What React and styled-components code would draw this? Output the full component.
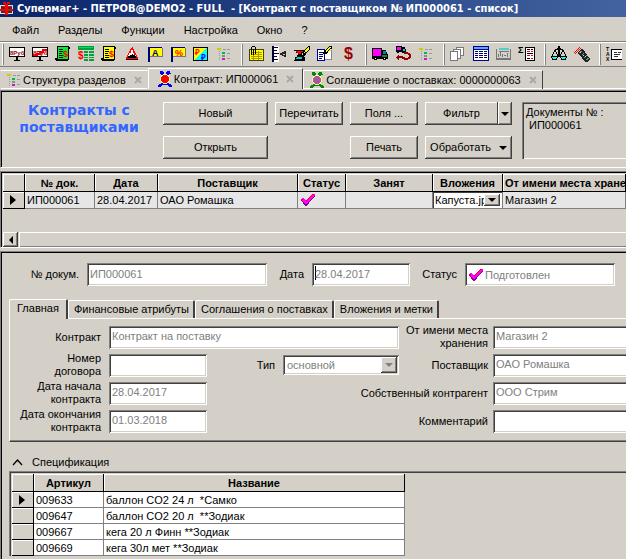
import React from 'react'
import styled, { createGlobalStyle, css } from 'styled-components'

const GlobalStyle = createGlobalStyle`
  * {
    box-sizing: border-box;
  }
  body {
    margin: 0;
    background: #d4d0c8;
    color: #000;
    font-family: 'Liberation Sans', Arial, sans-serif;
    font-size: 11px;
    line-height: 13px;
    overflow: hidden;
  }
  button, input, select {
    font: inherit;
    color: inherit;
  }
`

/* ---------- icons ---------- */

const Glyph = styled.svg`
  display: block;
  flex: none;
  width: 16px;
  height: 16px;
  shape-rendering: crispEdges;
  overflow: visible;
`

const Icon = ({ children }) => (
  <Glyph viewBox="0 0 16 16" aria-hidden="true">{children}</Glyph>
)

const Letter = ({ x, y, size = 9, fill = '#f00', children }) => (
  <text x={x} y={y} fontSize={size} fontWeight="bold" fill={fill}>{children}</text>
)

const Billboard = ({ crossed }) => (
  <Icon>
    <path d="M0 1h16v10H0z" fill="#000" />
    <path d="M1 2h14v8H1z" fill="#fff" />
    <Letter x={1} y={9} size={6} fill="#900">8Руб</Letter>
    {crossed && <path d="M1 10V8h3V7h3V5h3V3h5v2h-3v2H9v2H6v1z" fill="#e00" />}
    <path d="M7 11h2v3h-2zM5 14h6v1H5z" fill="#000" />
  </Icon>
)

const Bill = ({ color }) => (
  <Icon>
    <path d="M2 0h12v1h1v2h-1v11h-1v1H1v-1H0v-2h2z" fill="#000" />
    <path d="M3 1h10v12H3z" fill={color} />
    <path d="M4 3h4v1H4zM4 5h4v1H4zM4 7h3v1H4zM4 9h4v1H4zM4 11h4v1H4z" fill="#000" />
    <Letter x={8} y={11} size={9}>$</Letter>
  </Icon>
)

const PriceTable = () => (
  <Icon>
    <path d="M0 0h16v4H0zM6 5h4v2H6zM11 5h5v2h-5zM6 8h4v2H6zM11 8h5v2h-5zM6 11h4v1H6zM11 11h5v1h-5zM6 13h4v2H6zM11 13h5v2h-5z" fill="#00a03c" />
    <path d="M1 1h14v1H1z" fill="#0d5" />
    <Letter x={0} y={13} size={10}>$</Letter>
  </Icon>
)

const Warning = () => (
  <Icon>
    <path d="M8 1h1v2h1v2h1v2h1v2h1v2h1v2H2v-2h1V9h1V7h1V5h1V3h1V2h1z" fill="#f00" />
    <path d="M7 4h2v3h1v2h2v3H4V9h1V7h2z" fill="#fff" />
    <path d="M4 10h2V9h2V8h1v1h2v1h1v2H4zM2 13h12v1H2z" fill="#000" />
  </Icon>
)

const Flag = ({ letter, color }) => (
  <Icon>
    <path d="M1 1h14v10H3v5H1z" fill="#000080" />
    <path d="M3 2h12v9H3z" fill="#ff0" />
    <path d="M3 11h13V2h-1v8H3z" fill="#777" />
    <Letter x={5} y={10} size={9} fill={color}>{letter}</Letter>
  </Icon>
)

const Currency = () => (
  <Icon>
    <path d="M0 1h15v14H0z" fill="#000" />
    <path d="M1 2h13L1 14z" fill="#ff0" />
    <path d="M14 2v12H1z" fill="#0ff" />
    <Letter x={2} y={9} size={8}>₽</Letter>
    <Letter x={8} y={14} size={8} fill="#00f">₽</Letter>
  </Icon>
)

const Tree = () => (
  <Icon>
    <path d="M1 2h4v2H1z" fill="#cc0" />
    <path d="M7 3h3v1H7zM11 3h3v1h-3zM3 5h1v1H3zM3 7h1v1H3zM3 9h1v1H3zM3 11h1v1H3zM3 13h1v1H3zM11 7h3v1h-3zM11 12h3v1h-3z" fill="#999" />
    <path d="M6 6h3v2H6z" fill="#0b4" />
    <path d="M6 9h3v2H6z" fill="#7a9a80" />
    <path d="M6 12h3v2H6z" fill="#b2c" />
  </Icon>
)

const Attachment = () => (
  <Icon>
    <path d="M1 3h15v12H1z" fill="#440" />
    <path d="M2 4h13v10H2z" fill="#ff0" />
    <path d="M3 6h11v1H3zM3 8h11v1H3zM3 10h11v1H3zM3 12h11v1H3zM5 5h1v9H5zM10 5h1v9h-1z" fill="#a90" />
    <path d="M3 1h1v8H3zM4 0h3v1H4zM7 1h1v7H7zM5 3h1v6H5z" fill="#000" />
  </Icon>
)

const Ruler = () => (
  <Icon>
    <path d="M1 0h7v16H1z" fill="#fff" />
    <path d="M1 0h2v16H1zM3 1h4v1H3zM3 4h3v1H3zM3 7h5v1H3zM3 10h3v1H3zM3 13h4v1H3z" fill="#003" />
    <path d="M9 7h2V6h2V5h2v6h-2v-1h-2V9H9zM12 8h2v1h-2z" fill="#222" fillRule="evenodd" />
  </Icon>
)

const Hourglass = () => (
  <Icon>
    <path d="M0 4h11v1h-1v1H9v1H8v2h2v2h1v4H0v-1h1v-3h2V9h1V7H2V5H0z" fill="#000" />
    <path d="M2 5h7v1H7v2H4V7H3z" fill="#f00" />
    <path d="M3 11h5v2H2z" fill="#0cc" />
    <path d="M14 0h2v3l-4 5-3 3-1-1 2-5z" fill="#000" />
    <path d="M14 1h1v2l-3 3-2 1 1-2z" fill="#ff0" />
  </Icon>
)

const Notes = () => (
  <Icon>
    <path d="M0 3h8v12H0z" fill="#000080" />
    <path d="M1 4h6v10H1zM8 5h7v9H8z" fill="#fff" />
    <path d="M2 6h4v1H2zM2 8h4v1H2zM2 10h4v1H2zM2 12h3v1H2z" fill="#000080" />
    <path d="M14 4h1v10H8v-1h6z" fill="#888" />
    <path d="M6 6l6-6h3v3L9 8H6z" fill="#000" />
    <path d="M8 5l4-4h2L9 6zM10 6l4-4v1l-3 4z" fill="#ff0" />
  </Icon>
)

const Dollar = () => (
  <Icon>
    <Letter x={4} y={13} size={16} fill="#900">$</Letter>
  </Icon>
)

const Truck = () => (
  <Icon>
    <path d="M0 2h10v2h4v2h1v2h1v5h-2v1h-3v-1H5v1H2v-1H0z" fill="#000" />
    <path d="M1 3h8v7H1z" fill="#f0f" />
    <path d="M11 5h3v3h-3z" fill="#088" />
    <path d="M10 9h5v2h-5z" fill="#084" />
    <path d="M3 12h1v1H3zM12 12h1v1h-1z" fill="#fff" />
  </Icon>
)

const Route = () => (
  <Icon>
    <path d="M1 0h6v1h3v2h1v3H9v1H7V6H4v1H2V6H1z" fill="#000" />
    <path d="M2 1h4v3H2z" fill="#f0f" />
    <path d="M8 3h2v2H8z" fill="#0cc" />
    <path d="M9 6h4v1h2v1h1v4h-1v1h-2v1H9v-1H7v-1H4v2H3v-1H2v-1H1v-1h1v-1h1V9h1v1h4v1h2v1h3v-1h1V9h-1V8H9z" fill="#900" />
  </Icon>
)

const Copies = () => (
  <Icon>
    <path d="M6 1h8v9H6z" fill="#777" />
    <path d="M7 2h6v7H7z" fill="#fff" />
    <path d="M3 3h8v10H3z" fill="#777" />
    <path d="M4 4h6v8H4z" fill="#fff" />
    <path d="M0 5h8v10H0z" fill="#777" />
    <path d="M1 6h6v8H1z" fill="#fff" />
  </Icon>
)

const Sheet = () => (
  <Icon>
    <path d="M0 0h16v15H0z" fill="#000080" />
    <path d="M1 1h14v2H1z" fill="#5af" />
    <path d="M1 4h14v10H1z" fill="#fff" />
    <path d="M2 5h3v1H2zM6 5h4v1H6zM11 5h3v1h-3zM2 7h3v1H2zM6 7h4v1H6zM11 7h3v1h-3zM2 9h3v1H2zM6 9h4v1H6zM11 9h3v1h-3zM2 11h3v1H2zM6 11h4v1H6zM11 11h3v1h-3z" fill="#000080" />
  </Icon>
)

const Planner = () => (
  <Icon>
    <path d="M3 2h10v2H3z" fill="#5cc" />
    <path d="M0 3h1v11H0zM14 3h1v11h-1zM3 5h10v1H3zM0 12h15v2H0zM2 8h1v3H2zM4 6h1v4H4zM6 8h1v3H6zM8 9h2v1H8zM11 7h1v4h-1z" fill="#777" />
  </Icon>
)

const SumSheet = () => (
  <Icon>
    <Letter x={-1} y={7} size={9} fill="#000">Σ</Letter>
    <path d="M6 1h10v14H6z" fill="#000" />
    <path d="M7 2h8v12H7z" fill="#fff" />
    <path d="M8 3h3v1H8zM12 3h2v1h-2zM8 7h6v1H8zM8 12h3v1H8z" fill="#000" />
    <path d="M8 5h3v1H8zM12 5h2v1h-2zM8 9h3v1H8zM12 9h2v1h-2zM12 12h2v1h-2z" fill="#f00" />
  </Icon>
)

const Scales = () => (
  <Icon>
    <path d="M7 0h2v2h1v1h2v1H9v7H7V4H4V3h2V2h1z" fill="#000" />
    <path d="M4 4l-3 6M4 4l3 6M12 4l-3 6M12 4l3 6" stroke="#000" fill="none" />
    <path d="M0 10h7v2H6v2H1v-2H0zM9 10h7v2h-1v2h-5v-2H9z" fill="#000" />
    <path d="M1 11h5v1H5v1H2v-1H1zM10 11h5v1h-1v1h-3v-1h-1z" fill="#0ff" />
  </Icon>
)

const Torch = () => (
  <Icon>
    <path d="M0 7l6-6M1 8l6-6" stroke="#f00" strokeWidth="1" fill="none" />
    <path d="M3 7l5-4 3 3 5 7-3 3h-2L6 9z" fill="#222" />
    <path d="M5 7l3-2M8 9l2-2M10 12l3-3M12 14l3-2" stroke="#5a9a9a" fill="none" />
    <path d="M6 6h1v1H6zM9 9h1v1H9zM11 10h1v1h-1z" fill="#ddd" />
  </Icon>
)

const Tax = () => (
  <Icon>
    <Letter x={0} y={5} size={5} fill="#000">T</Letter>
    <Letter x={0} y={10} size={5} fill="#000">A</Letter>
    <Letter x={0} y={15} size={5} fill="#000">X</Letter>
    <path d="M5 3h11v11H5z" fill="#000" />
    <path d="M6 4h10v9H6z" fill="#fff" />
    <path d="M8 6h3v1H8zM12 6h3v1h-3zM8 8h6v1H8zM8 10h4v1H8z" fill="#333" />
  </Icon>
)

const Flower = ({ core, leaf }) => (
  <Icon>
    <path d="M3 0h3v1h1v2h2V1h1V0h3v2h1v1h-2v10h2v1h1v2h-3v-1h-1v-1H5v1H4v1H1v-2h1v-1h2V3H3z" fill={leaf} />
    <path d="M6 3h4v1h2v2h1v4h-1v2h-2v1H6v-1H4v-2H3V6h1V4h2z" fill="#ff8" />
    <path d="M6 4h4v1h1v1h1v4h-1v1h-1v1H6v-1H5v-1H4V6h1V5h1z" fill={core} />
  </Icon>
)

const AppMark = () => (
  <Icon>
    <path d="M0 4h13v9H0z" fill="#ddd" />
    <path d="M1 5h4v3H1zM8 5h4v3H8zM1 10h4v2H1zM8 10h4v2H8z" fill="#333" />
    <path d="M5 3h3v11H5zM0 8h13v2H0zM3 1h3v2H3zM7 1h3v2H7z" fill="#f00" />
    <path d="M2 5h3v1H2zM8 5h3v1H8z" fill="#f00" />
  </Icon>
)

const Tick = () => (
  <Glyph viewBox="0 0 16 16" role="img" aria-label="Подготовлен">
    <path d="M1 8l2-1 3 3 6-7 3-1v2l-3 3-5 7H5z" fill="#808" />
    <path d="M1 7l2-1 3 3 6-7h3v1l-3 3-6 7z" fill="#f0f" />
    <path d="M6 9l6-7h2v1h-2l-5 6zM1 7h2v1H1z" fill="#f00" />
  </Glyph>
)

const Arrow = styled.span`
  flex: none;
  border: 4px solid transparent;
  border-top-color: ${({ $muted }) => ($muted ? '#808080' : '#000')};
  border-bottom: 0;
`

const Pointer = styled.span`
  display: block;
  width: 6px;
  margin-left: 7px;
  border: 5px solid transparent;
  border-left: 6px solid #000;
  border-right: 0;
`

/* ---------- window chrome ---------- */

const raised = css`
  background: #d4d0c8;
  border: 0;
  border-radius: 0;
  box-shadow: inset -1px -1px #404040, inset 1px 1px #fff, inset -2px -2px #808080;
`

const Window = styled.div`
  min-height: 100vh;
  display: flex;
  flex-direction: column;
`

const TitleBar = styled.header`
  display: flex;
  align-items: center;
  gap: 1px;
  height: 17px;
  background: linear-gradient(90deg, #0a246a, #42639f);
  color: #fff;
  font: bold 11px/13px 'DejaVu Sans Condensed', 'DejaVu Sans', sans-serif;
  white-space: pre;
`

const MenuBar = styled.nav`
  display: flex;
  gap: 19px;
  height: 24px;
  padding: 7px 12px 0;
`

const MenuItem = styled.a`
  color: #000;
  text-decoration: none;
`

const ToolBar = styled.div`
  display: flex;
  align-items: center;
  height: 26px;
  padding-left: 2px;
  border-top: 1px solid #808080;
  border-bottom: 1px solid #808080;
  box-shadow: inset 0 1px #fff;
`

const ToolButton = styled.button`
  display: flex;
  align-items: center;
  justify-content: center;
  flex: none;
  width: 23px;
  height: 22px;
  padding: 0;
  border: 0;
  background: none;
`

const Divider = styled.span`
  flex: none;
  width: 2px;
  height: 21px;
  margin: 0 1px 0 6px;
  border-left: 1px solid #fff;
  border-right: 1px solid #808080;

  &:first-child {
    margin-left: 0;
  }
`

const DocTabs = styled.div`
  display: flex;
  align-items: flex-end;
  height: 22px;
  padding-top: 1px;
  box-shadow: inset 0 -1px #fff;
`

const DocTab = styled.button`
  display: flex;
  align-items: center;
  flex: none;
  gap: 1px;
  height: ${({ $active }) => ($active ? 21 : 19)}px;
  padding: 0 ${({ $active }) => ($active ? 8 : 5)}px;
  border: 0;
  border-top: 1px solid #fff;
  border-right: 1px solid ${({ $first }) => ($first ? '#d4d0c8' : '#404040')};
  border-left: 1px solid ${({ $first }) => ($first ? '#d4d0c8' : '#fff')};
  background: ${({ $active }) => ($active ? '#d4d0c8' : 'none')};
  white-space: nowrap;
`

const CloseMark = styled.svg`
  width: 8px;
  height: 8px;
  margin-left: 7px;
  stroke: #a8a8a8;
  stroke-width: 2;
`

const Panel = styled.section`
  border-top: 1px solid #808080;
  border-left: 1px solid #808080;
  box-shadow: inset 1px 1px #000;
`

/* ---------- command panel ---------- */

const Commands = styled(Panel)`
  display: grid;
  grid-template-columns: 154px 105px 68px 68px 87px minmax(100px, 1fr);
  grid-template-rows: 23px 23px;
  gap: 11px 7px;
  height: 78px;
  margin-top: 1px;
  padding: 11px 0 0 1px;
  border-bottom: 1px solid #fff;
`

const Heading = styled.h1`
  grid-row: span 2;
  margin: 0;
  color: #3366ff;
  font: bold 14px/17px 'DejaVu Sans', Verdana, sans-serif;
  text-align: center;
`

const Button = styled.button`
  ${raised}
  display: flex;
  align-items: center;
  justify-content: center;
  gap: 8px;
  padding: 0;
  white-space: nowrap;
`

const Split = styled.div`
  display: flex;

  ${Button}:first-child {
    flex: 1;
    box-shadow: inset -1px -1px #404040, inset 1px 1px #fff, inset 0 -2px #808080;
  }
  ${Button}:last-child {
    width: 14px;
  }
`

const OpenButton = styled(Button)`
  grid-column: 2;
`

const PrintButton = styled(Button)`
  grid-column: 4;
`

const Info = styled.div`
  grid-area: 1 / 6 / 3 / 7;
  margin-left: 3px;
  padding: 4px;
  box-shadow: inset 1px 1px #808080, inset 2px 2px #404040, inset 0 -1px #fff;
  white-space: pre;
`

/* ---------- grids ---------- */

const GridPanel = styled(Panel)`
  height: 77px;
  margin-top: 3px;
  padding: 2px 0 0 2px;
  border-bottom: 1px solid #fff;
  display: flex;
  flex-direction: column;
  justify-content: space-between;
  overflow: hidden;
`

const Table = styled.table`
  width: ${({ $width }) => $width};
  table-layout: fixed;
  border-collapse: separate;
  border-spacing: 0;
  line-height: 12px;
`

const Th = styled.th`
  height: 18px;
  padding: 0 2px;
  border-right: 1px solid #000;
  border-bottom: 1px solid #000;
  box-shadow: inset 1px 1px #fff;
  background: #d4d0c8;
  overflow: hidden;
  white-space: nowrap;
`

const Td = styled.td`
  height: 16px;
  padding: ${({ $flush }) => ($flush ? '0' : '0 2px')};
  border-right: 1px solid #808080;
  border-bottom: 1px solid #808080;
  background: ${({ $lit }) => ($lit ? '#e6e6e6' : '#fff')};
  overflow: hidden;
  white-space: pre;
`

const RowHead = styled.th`
  padding: 0;
  border-right: 1px solid #000;
  border-bottom: 1px solid #000;
  box-shadow: inset 1px 1px #fff;
  background: #d4d0c8;
`

const ScrollBar = styled.div`
  display: flex;
  height: 15px;
  gap: 1px;
  box-shadow: 0 1px #404040;
`

const ScrollButton = styled.button`
  ${raised}
  display: flex;
  align-items: center;
  justify-content: center;
  width: 15px;
  padding: 0;
`

const LeftArrow = styled.span`
  border: 4px solid transparent;
  border-right-color: #000;
  border-left: 0;
`

const Thumb = styled.div`
  flex: 1;
  box-shadow: inset 1px 1px #fff, inset 0 -1px #808080;
`

/* ---------- form ---------- */

const sunken = css`
  border: 0;
  border-radius: 0;
  background: #fff;
  box-shadow: inset 1px 1px #808080, inset -1px -1px #fff, inset 2px 2px #404040, inset -2px -2px #d4d0c8;
`

const Details = styled(Panel)`
  flex: 1;
  margin-top: 3px;
  padding: 11px 0 0 8px;
  overflow: hidden;
`

const Summary = styled.div`
  display: grid;
  grid-template-columns: 78px 180px 45px 98px 55px 150px;
  align-items: center;
  height: 23px;
`

const Label = styled.label`
  padding-right: ${({ $tight }) => ($tight ? 5 : 8)}px;
  grid-column: ${({ $col }) => $col || 'auto'};
  text-align: right;
  white-space: ${({ $wrap }) => ($wrap ? 'pre-line' : 'nowrap')};
`

const Input = styled.input`
  ${sunken}
  width: 100%;
  min-width: 0;
  height: 23px;
  padding: 0 3px 2px;
  color: #808080;
  outline: 0;
  grid-column: ${({ $col }) => $col || 'auto'};
  ${({ $caret }) => $caret && css`
    background: linear-gradient(#000, #000) 3px 3px / 1px 14px no-repeat #fff;
  `}
`

const StatusField = styled.div`
  ${sunken}
  display: flex;
  align-items: center;
  height: 23px;
  padding-left: 3px;

  ${Input} {
    height: 19px;
    padding: 0 1px;
    background: none;
    box-shadow: none;
  }
`

const Tabs = styled.div`
  display: flex;
  align-items: flex-end;
  height: 20px;
  margin-top: 12px;
`

const Tab = styled.button`
  height: ${({ $active }) => ($active ? 20 : 18)}px;
  margin-bottom: ${({ $active }) => ($active ? -1 : 0)}px;
  padding: ${({ $active }) => ($active ? '0 7px 3px' : '0 4px 0 5px')};
  border: 0;
  border-top: 1px solid #fff;
  border-left: 1px solid #fff;
  border-right: 2px solid #404040;
  border-radius: 2px 2px 0 0;
  background: #d4d0c8;
  white-space: nowrap;
`

const Form = styled.form`
  display: grid;
  grid-template-columns: 99px 98px 76px 116px 94px minmax(150px, 1fr);
  grid-auto-rows: 22px;
  row-gap: 6px;
  align-items: center;
  height: 124px;
  padding-top: 7px;
  border-top: 1px solid #fff;
  border-left: 1px solid #fff;
  border-bottom: 1px solid #404040;
  box-shadow: inset 0 -1px #808080;
`

const Combo = styled.div`
  position: relative;
  height: ${({ $small }) => ($small ? 16 : 20)}px;
`

const Select = styled.select`
  ${sunken}
  appearance: none;
  width: 100%;
  height: 100%;
  padding: 0 0 0 ${({ $small }) => ($small ? 2 : 4)}px;
  color: ${({ disabled }) => (disabled ? '#808080' : '#000')};
  opacity: 1;
  ${({ $small }) => $small && css`
    box-shadow: inset 1px 1px #404040;
  `}
`

const ComboArrow = styled.span`
  ${raised}
  position: absolute;
  top: 2px;
  right: 2px;
  bottom: 2px;
  width: 16px;
  display: flex;
  align-items: center;
  justify-content: center;
  pointer-events: none;
`

const SpecTitle = styled.h2`
  display: flex;
  align-items: center;
  gap: 9px;
  margin: 13px 0 1px 3px;
  font-size: 11px;
  font-weight: normal;
  line-height: 15px;
`

const SpecGrid = styled.div`
  padding: 2px 0 0 2px;
  border-top: 1px solid #808080;
  border-left: 1px solid #808080;
  box-shadow: inset 1px 1px #404040;
`

const tools = [
  [
    ['Цены', <Billboard />], ['Отмена цен', <Billboard crossed />], ['Счета', <Bill color="#0e3" />],
    ['Прайс', <PriceTable />], ['Накладные', <Bill color="#ff0" />], ['Контроль', <Warning />],
    ['Акции', <Flag letter="A" color="#000080" />], ['Скидки', <Flag letter="%" color="#f00" />],
    ['Валюты', <Currency />], ['Структура', <Tree />],
  ],
  [
    ['Вложения', <Attachment />], ['Измерения', <Ruler />], ['Сроки', <Hourglass />],
    ['Заметки', <Notes />], ['Оплата', <Dollar />],
  ],
  [['Поставки', <Truck />], ['Маршруты', <Route />], ['Дерево', <Tree />]],
  [['Копии', <Copies />], ['Таблица', <Sheet />], ['План', <Planner />], ['Итоги', <SumSheet />]],
  [['Баланс', <Scales />], ['Поиск', <Torch />]],
  [['Налоги', <Tax />]],
]

const menu = ['Файл', 'Разделы', 'Функции', 'Настройка', 'Окно', '?']

const docTabs = [
  { title: 'Структура разделов', icon: <Tree />, first: true },
  { title: 'Контракт: ИП000061', icon: <Flower core="#f00" leaf="#00f" />, active: true },
  { title: 'Соглашение о поставках: 0000000063', icon: <Flower core="#a5a" leaf="#080" /> },
]

const formTabs = ['Главная', 'Финансовые атрибуты', 'Соглашения о поставках', 'Вложения и метки']

const items = [
  ['009633', 'баллон CO2 24 л  *Самко'],
  ['009647', 'баллон CO2 20 л  **Зодиак'],
  ['009667', 'кега 20 л Финн **Зодиак'],
  ['009669', 'кега 30л мет **Зодиак'],
]

const App = () => {
  return (
    <Window>
      <GlobalStyle />
      <TitleBar>
        <AppMark />
        {'Супермаг+ - ПЕТРОВ@DEMO2 - FULL  - [Контракт с поставщиком № ИП000061 - список]'}
      </TitleBar>
      <MenuBar>
        {menu.map((name) => <MenuItem href="#" key={name}>{name}</MenuItem>)}
      </MenuBar>
      <ToolBar>
        {tools.map((group, i) => (
          <React.Fragment key={i}>
            <Divider />
            {group.map(([name, icon]) => (
              <ToolButton key={name} aria-label={name}>{icon}</ToolButton>
            ))}
          </React.Fragment>
        ))}
      </ToolBar>
      <DocTabs>
        {docTabs.map((tab) => (
          <DocTab key={tab.title} $active={tab.active} $first={tab.first}>
            {tab.icon}
            {tab.title}
            <CloseMark viewBox="0 0 8 8"><path d="M1 1l6 6M7 1l-6 6" /></CloseMark>
          </DocTab>
        ))}
      </DocTabs>

      <Commands>
        <Heading>Контракты с поставщиками</Heading>
        <Button>Новый</Button>
        <Button>Перечитать</Button>
        <Button>Поля ...</Button>
        <Split>
          <Button>Фильтр</Button>
          <Button aria-label="Выбрать фильтр"><Arrow /></Button>
        </Split>
        <OpenButton>Открыть</OpenButton>
        <PrintButton>Печать</PrintButton>
        <Button>Обработать <Arrow /></Button>
        <Info>{'Документы № :\n ИП000061'}</Info>
      </Commands>

      <GridPanel>
        <Table $width="100%">
          <colgroup>
            <col width="22" /><col width="70" /><col width="63" /><col width="140" />
            <col width="48" /><col width="87" /><col width="70" /><col />
          </colgroup>
          <thead>
            <tr>
              <Th /><Th>№ док.</Th><Th>Дата</Th><Th>Поставщик</Th><Th>Статус</Th>
              <Th>Занят</Th><Th>Вложения</Th><Th>От имени места хранения</Th>
            </tr>
          </thead>
          <tbody>
            <tr>
              <RowHead><Pointer /></RowHead>
              <Td $lit>ИП000061</Td>
              <Td $lit>28.04.2017</Td>
              <Td $lit>ОАО Ромашка</Td>
              <Td $lit><Tick /></Td>
              <Td $lit />
              <Td $flush>
                <Combo $small>
                  <Select $small aria-label="Вложения"><option>Капуста.jpg</option></Select>
                  <ComboArrow><Arrow /></ComboArrow>
                </Combo>
              </Td>
              <Td $lit>Магазин 2</Td>
            </tr>
          </tbody>
        </Table>
        <ScrollBar>
          <ScrollButton aria-label="Влево"><LeftArrow /></ScrollButton>
          <Thumb />
        </ScrollBar>
      </GridPanel>

      <Details>
        <Summary>
          <Label htmlFor="num">№ докум.</Label>
          <Input id="num" defaultValue="ИП000061" />
          <Label htmlFor="date">Дата</Label>
          <Input id="date" defaultValue="28.04.2017" $caret />
          <Label htmlFor="status">Статус</Label>
          <StatusField>
            <Tick />
            <Input id="status" defaultValue="Подготовлен" />
          </StatusField>
        </Summary>

        <Tabs>
          {formTabs.map((name, i) => <Tab key={name} $active={i === 0}>{name}</Tab>)}
        </Tabs>
        <Form>
          <Label htmlFor="contract">Контракт</Label>
          <Input id="contract" defaultValue="Контракт на поставку" $col="2 / 5" />
          <Label htmlFor="place" $wrap $tight>{'От имени места\nхранения'}</Label>
          <Input id="place" defaultValue="Магазин 2" />

          <Label htmlFor="agreement" $wrap>{'Номер\nдоговора'}</Label>
          <Input id="agreement" />
          <Label htmlFor="type">Тип</Label>
          <Combo>
            <Select id="type" disabled><option>основной</option></Select>
            <ComboArrow><Arrow $muted /></ComboArrow>
          </Combo>
          <Label htmlFor="supplier" $tight>Поставщик</Label>
          <Input id="supplier" defaultValue="ОАО Ромашка" />

          <Label htmlFor="start" $wrap>{'Дата начала\nконтракта'}</Label>
          <Input id="start" defaultValue="28.04.2017" />
          <Label htmlFor="own" $tight $col="4 / 6">Собственный контрагент</Label>
          <Input id="own" defaultValue="ООО Стрим" />

          <Label htmlFor="end" $wrap>{'Дата окончания\nконтракта'}</Label>
          <Input id="end" defaultValue="01.03.2018" />
          <Label htmlFor="comment" $tight $col="5">Комментарий</Label>
          <Input id="comment" />
        </Form>

        <SpecTitle>
          <svg width="11" height="7" viewBox="0 0 11 7" fill="none" stroke="#000" strokeWidth="1.3">
            <path d="M1 6l4.500-5 4.500 5" />
          </svg>
          Спецификация
        </SpecTitle>
        <SpecGrid>
          <Table $width="393px">
            <colgroup>
              <col width="22" /><col width="70" /><col />
            </colgroup>
            <thead>
              <tr><Th /><Th>Артикул</Th><Th>Название</Th></tr>
            </thead>
            <tbody>
              {items.map(([code, name], i) => (
                <tr key={code}>
                  <RowHead>{i === 0 && <Pointer />}</RowHead>
                  <Td>{code}</Td>
                  <Td>{name}</Td>
                </tr>
              ))}
            </tbody>
          </Table>
        </SpecGrid>
      </Details>
    </Window>
  )
}

export default App
